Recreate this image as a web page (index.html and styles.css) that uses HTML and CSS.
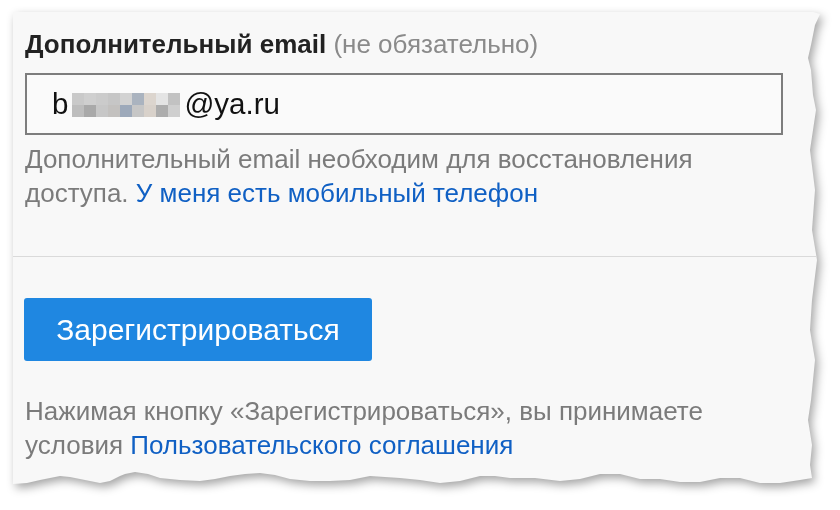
FILE: index.html
```html
<!DOCTYPE html>
<html lang="ru">
<head>
<meta charset="utf-8">
<title>Регистрация</title>
<link rel="stylesheet" href="styles.css">
</head>
<body>
<div class="page">
  <div class="shadow">
    <div class="card">
      <section class="field">
        <div class="label"><b>Дополнительный email</b> <span class="opt">(не обязательно)</span></div>
        <div class="input">
          <span class="val">b</span>
          <span class="blur">
            <i class="c1"></i><i class="c2"></i><i class="c3"></i><i class="c4"></i><i class="c5"></i><i class="c6"></i><i class="c7"></i><i class="c8"></i><i class="c9"></i>
            <i class="d1"></i><i class="d2"></i><i class="d3"></i><i class="d4"></i><i class="d5"></i><i class="d6"></i><i class="d7"></i><i class="d8"></i><i class="d9"></i>
          </span>
          <span class="val">@ya.ru</span>
        </div>
        <p class="hint">Дополнительный email необходим для восстановления<br>доступа. <a class="link" href="#">У меня есть мобильный телефон</a></p>
      </section>
      <section class="submit">
        <button class="btn" type="button">Зарегистрироваться</button>
        <p class="terms">Нажимая кнопку «Зарегистрироваться», вы принимаете<br>условия <a class="link" href="#">Пользовательского соглашения</a></p>
      </section>
    </div>
  </div>
</div>
</body>
</html>
```

FILE: styles.css
```css
html, body {
  margin: 0;
  padding: 0;
  background: #ffffff;
}
body {
  font-family: "Liberation Sans", Arial, sans-serif;
  width: 840px;
  height: 510px;
  overflow: hidden;
}
.page {
  padding: 12px 0 0 13px;
}
.shadow {
  width: 807px;
  height: 472px;
  filter: drop-shadow(3px 4px 5px rgba(0, 0, 0, 0.36));
}
.card {
  width: 807px;
  height: 472px;
  background: #f8f8f8;
  box-sizing: border-box;
  padding-top: 15px;
  clip-path: polygon(
    0 0, 800px 0, 807px 2px, 802px 13px, 798px 33px, 795px 46px, 798px 58px,
    800px 83px, 803px 98px, 797px 138px, 802px 178px, 799px 218px, 804px 248px,
    799px 288px, 797px 318px, 802px 348px, 798px 388px, 795px 408px, 799px 433px,
    797px 453px, 799px 466px,
    787px 468px, 767px 471px, 747px 471px, 727px 466px, 707px 466px, 687px 470px,
    667px 470px, 647px 467px, 627px 467px, 607px 462px, 587px 462px, 567px 467px,
    547px 469px, 522px 466px, 497px 466px, 482px 464px, 467px 464px, 447px 469px,
    427px 471px, 407px 468px, 387px 466px, 372px 465px, 357px 464px, 337px 468px,
    317px 469px, 297px 469px, 277px 467px, 262px 463px, 247px 461px, 232px 462px,
    217px 464px, 202px 467px, 187px 469px, 167px 468px, 147px 466px, 135px 462px,
    122px 460px, 112px 462px, 107px 464px, 97px 469px, 87px 471px, 77px 469px,
    67px 467px, 57px 465px, 47px 464px, 37px 466px, 27px 468px, 14px 471px, 0 472px
  );
}
.field {
  padding: 0 37px 46px 12px;
  border-bottom: 1px solid #dadada;
}
.label {
  font-size: 26px;
  line-height: 34px;
  color: #222222;
}
.label b {
  font-weight: bold;
}
.opt {
  color: #8a8a8a;
}
.input {
  margin-top: 12px;
  height: 62px;
  box-sizing: border-box;
  border: 2px solid #7d7d7d;
  background: #fafafa;
  display: flex;
  align-items: center;
  padding-left: 25px;
}
.val {
  font-size: 29.5px;
  line-height: 1;
  color: #111111;
}
.blur {
  display: grid;
  grid-template-columns: repeat(9, 12px);
  grid-template-rows: 12px 12px;
  margin: 2px 4px 0 4px;
}
.blur i { display: block; }
.c1 { background: #c9c9c9; }
.c2 { background: #cfcfcf; }
.c3 { background: #cbcbcb; }
.c4 { background: #c6c6c6; }
.c5 { background: #d2d2d2; }
.c6 { background: #aab3bf; }
.c7 { background: #dcd5ce; }
.c8 { background: #e4e4e4; }
.c9 { background: #c2c2c2; }
.d1 { background: #bdbdbd; }
.d2 { background: #a9a9a9; }
.d3 { background: #c7c7c7; }
.d4 { background: #c3c1bf; }
.d5 { background: #9da9ba; }
.d6 { background: #c6c6c6; }
.d7 { background: #d8d1ca; }
.d8 { background: #adadad; }
.d9 { background: #cfcfcf; }
.hint, .terms {
  margin: 7px 0 0;
  font-size: 26px;
  line-height: 34px;
  color: #7b7b7b;
}
.link {
  color: #1060c4;
  text-decoration: none;
}
.submit {
  padding: 41px 37px 0 11px;
}
.btn {
  display: block;
  width: 348px;
  height: 63px;
  border: none;
  border-radius: 3px;
  background: #1f87e1;
  color: #ffffff;
  font-family: "Liberation Sans", Arial, sans-serif;
  font-size: 30px;
  padding: 0;
}
.terms {
  margin-top: 33px;
  padding-left: 1px;
}
```
